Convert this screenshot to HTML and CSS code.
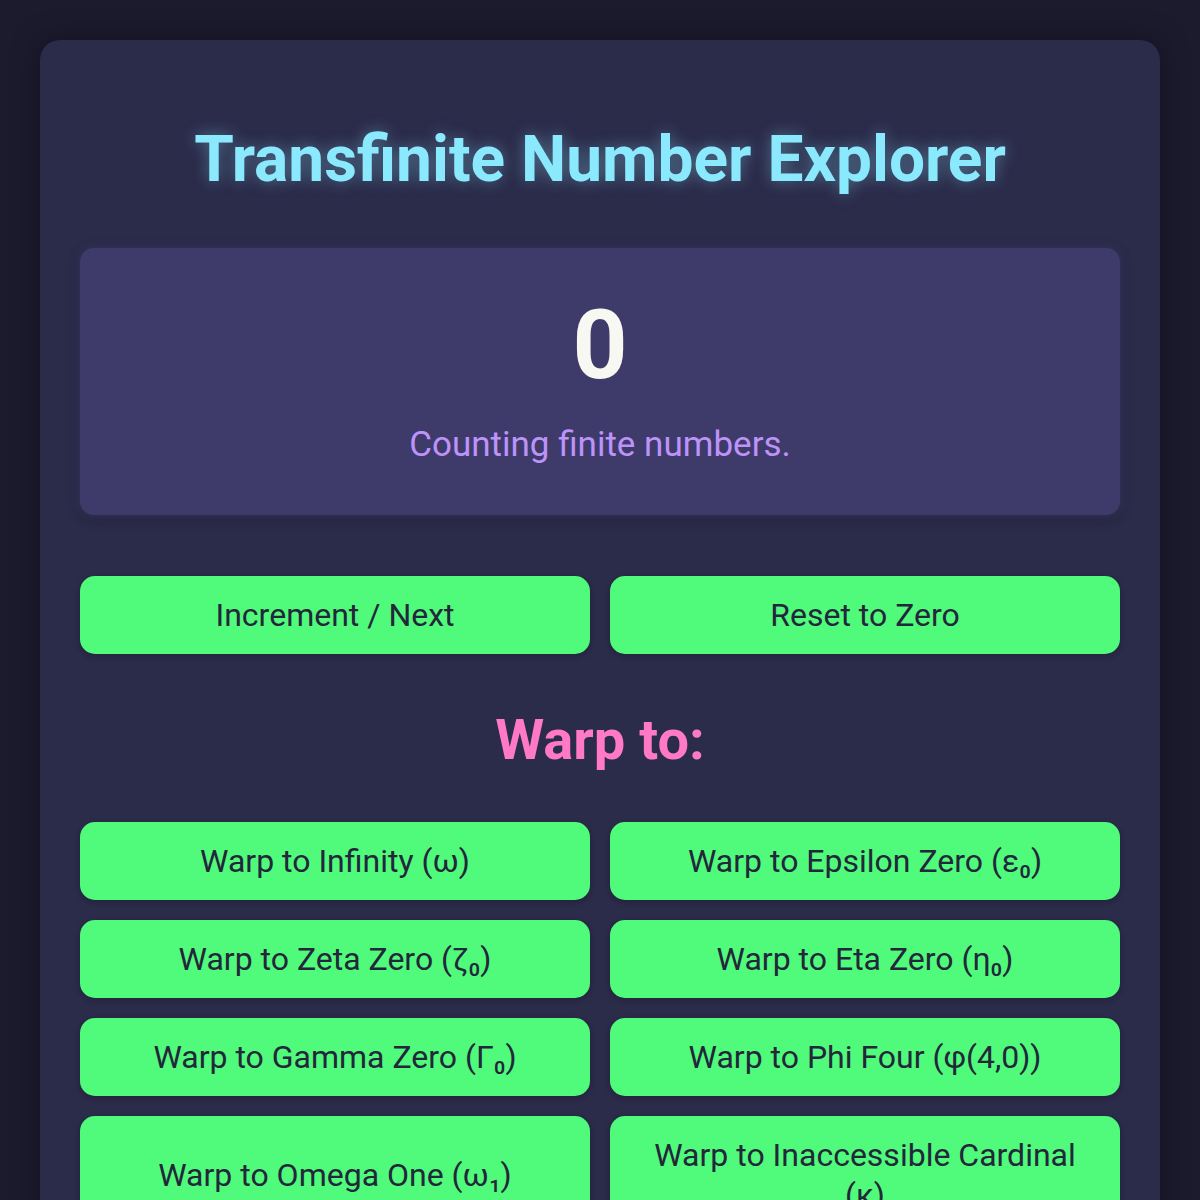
FILE: index.html
```html
<!DOCTYPE html>
<html lang="en">
<head>
    <meta charset="UTF-8">
    <meta name="viewport" content="width=device-width, initial-scale=1.0">
    <title>Transfinite Number Explorer</title>
    <link rel="stylesheet" href="styles.css">
</head>
<body>
    <div class="explorer">
        <h1>Transfinite Number Explorer</h1>

        <div class="display">
            <div class="value" id="value">0</div>
            <p class="status" id="status">Counting finite numbers.</p>
        </div>

        <div class="controls">
            <button id="next">Increment / Next</button>
            <button id="reset">Reset to Zero</button>
        </div>

        <h2>Warp to:</h2>

        <div class="controls warps">
            <button>Warp to Infinity (ω)</button>
            <button>Warp to Epsilon Zero (ε₀)</button>
            <button>Warp to Zeta Zero (ζ₀)</button>
            <button>Warp to Eta Zero (η₀)</button>
            <button>Warp to Gamma Zero (Γ₀)</button>
            <button>Warp to Phi Four (φ(4,0))</button>
            <button>Warp to Omega One (ω₁)</button>
            <button>Warp to Inaccessible Cardinal (κ)</button>
        </div>
    </div>

    <script>
        // Simple counter for the finite part
        let count = 0;
        const valueEl = document.getElementById('value');
        const statusEl = document.getElementById('status');
        document.getElementById('next').addEventListener('click', function() {
            count++;
            valueEl.textContent = count;
            statusEl.textContent = 'Counting finite numbers.';
        });
        document.getElementById('reset').addEventListener('click', function() {
            count = 0;
            valueEl.textContent = count;
            statusEl.textContent = 'Counting finite numbers.';
        });
    </script>
</body>
</html>
```
FILE: styles.css
```css
body {
    font-family: Roboto, "Noto Sans", Arial, sans-serif;
    background-color: #1c1b2e;
    margin: 0;
    padding: 40px;
    color: #f8f8f2;
}
.explorer {
    max-width: 1040px;
    margin: 0 auto;
    padding: 40px;
    background-color: #2b2b4a;
    border-radius: 20px;
    box-shadow: 0 0 30px rgba(0, 0, 0, 0.35);
    text-align: center;
}
.explorer h1 {
    font-size: 64px;
    font-weight: 700;
    color: #8be9fd;
    margin: 42px 0 51px;
    line-height: 75px;
    text-shadow: 0 0 16px rgba(139, 233, 253, 0.4);
}
.display {
    background-color: #3e3b6b;
    border-radius: 14px;
    padding: 41px 40px 50px;
    box-shadow: 0 0 10px rgba(62, 59, 107, 0.8), 0 4px 14px rgba(0, 0, 0, 0.2);
}
.display .value {
    font-size: 96px;
    font-weight: 700;
    line-height: 112px;
    color: #f8f8f2;
}
.display .status {
    font-size: 35px;
    line-height: 41px;
    color: #bd93f9;
    margin: 23px 0 0;
}
.controls {
    display: grid;
    grid-template-columns: 1fr 1fr;
    gap: 20px;
    margin-top: 61px;
}
.controls button {
    font-family: inherit;
    font-size: 32px;
    line-height: 40px;
    padding: 19px 24px;
    background-color: #50fa7b;
    color: #23273a;
    border: none;
    border-radius: 15px;
    cursor: pointer;
    box-shadow: 0 2px 6px rgba(0, 0, 0, 0.2);
}
.controls button:hover {
    background-color: #69ff90;
}
.explorer h2 {
    font-size: 56px;
    font-weight: 700;
    line-height: 66px;
    color: #ff79c6;
    margin: 53px 0 0;
}
.controls.warps {
    margin-top: 49px;
}
```
